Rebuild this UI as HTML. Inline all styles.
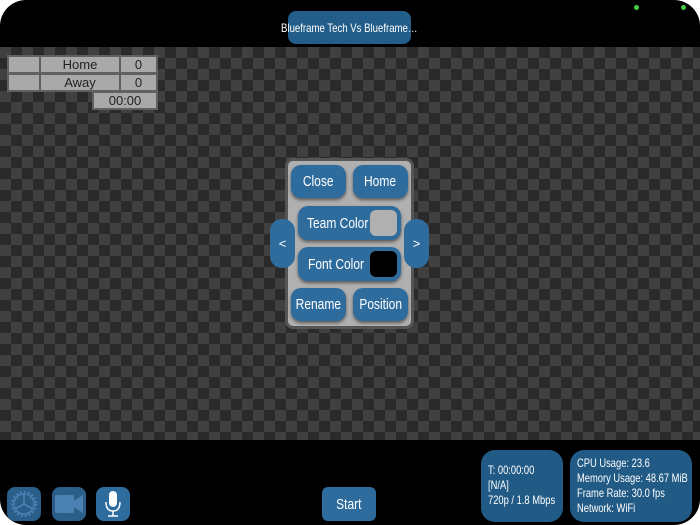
<!DOCTYPE html>
<html><head><style>
*{margin:0;padding:0;box-sizing:border-box}
body{width:700px;height:525px;background:#fff;overflow:hidden;font-family:"Liberation Sans",sans-serif}
#scr{position:absolute;left:0;top:0;width:700px;height:525px;background:#000;border-radius:26px;overflow:hidden}
#chk{position:absolute;left:0;top:47px;width:700px;height:393px;background-color:#2a2a2a;
background-image:linear-gradient(45deg,#404040 25%,transparent 25%,transparent 75%,#404040 75%),linear-gradient(45deg,#404040 25%,transparent 25%,transparent 75%,#404040 75%);
background-size:22px 22px;background-position:11px 0,0 11px}
.blue{background:#2f6c9e;color:#fff;position:absolute;display:flex;align-items:center;justify-content:center;font-family:"Liberation Sans",sans-serif;white-space:nowrap}
.n{display:inline-block;transform:scaleX(.8);transform-origin:center}
.l{transform-origin:left}
.cell{position:absolute;background:#a9a9a9;border:2px solid #606060;font-size:13px;color:#222;display:flex;align-items:center;justify-content:center}
.btn{border-radius:10px;font-size:15px;box-shadow:0 2px 3px rgba(0,0,0,.5)}
.stat{background:#215a85;color:#fff;position:absolute;border-radius:14px;font-size:12px;line-height:15px;padding:10px 0 0 7px;white-space:nowrap}
.stat .n{transform:scaleX(.78);transform-origin:left}
</style></head><body>
<div id="scr">
<div id="chk"></div>
<div class="blue" style="left:288px;top:11px;width:123px;height:33px;border-radius:8px;background:#235e8a;font-size:12px"><span class="n" style="transform:scaleX(.8)">Blueframe Tech Vs Blueframe…</span></div>
<div style="position:absolute;left:634px;top:5px;width:5px;height:5px;border-radius:50%;background:#4c4"></div>
<div style="position:absolute;left:681px;top:5px;width:5px;height:5px;border-radius:50%;background:#4c4"></div>
<div class="cell" style="left:7px;top:55px;width:34px;height:19px"></div>
<div class="cell" style="left:39px;top:55px;width:82px;height:19px">Home</div>
<div class="cell" style="left:119px;top:55px;width:39px;height:19px">0</div>
<div class="cell" style="left:7px;top:73px;width:34px;height:19px"></div>
<div class="cell" style="left:39px;top:73px;width:82px;height:19px">Away</div>
<div class="cell" style="left:119px;top:73px;width:39px;height:19px">0</div>
<div class="cell" style="left:92px;top:91px;width:66px;height:19px;font-size:13px">00:00</div>

<div style="position:absolute;left:285px;top:158px;width:129px;height:171px;background:#b0b0b0;border:3px solid #555;border-radius:8px"></div>
<div class="blue btn" style="left:291px;top:165px;width:55px;height:33px"><span class="n">Close</span></div>
<div class="blue btn" style="left:353px;top:165px;width:55px;height:33px"><span class="n">Home</span></div>
<div class="blue btn" style="left:298px;top:206px;width:103px;height:34px;justify-content:flex-start;padding-left:9px"><span class="n l">Team Color</span></div>
<div style="position:absolute;left:370px;top:210px;width:27px;height:26px;border-radius:6px;background:#b0b0b0"></div>
<div class="blue btn" style="left:298px;top:247px;width:103px;height:34px;justify-content:flex-start;padding-left:10px"><span class="n l">Font Color</span></div>
<div style="position:absolute;left:370px;top:251px;width:27px;height:26px;border-radius:6px;background:#000"></div>
<div class="blue btn" style="left:291px;top:288px;width:55px;height:33px"><span class="n">Rename</span></div>
<div class="blue btn" style="left:353px;top:288px;width:55px;height:33px"><span class="n">Position</span></div>
<div class="blue" style="left:270px;top:219px;width:25px;height:49px;border-radius:12px;font-size:13px">&lt;</div>
<div class="blue" style="left:404px;top:219px;width:25px;height:49px;border-radius:12px;font-size:13px">&gt;</div>

<div class="blue" style="left:7px;top:487px;width:34px;height:34px;border-radius:8px;background:#2b5f8a">
<svg width="30" height="30" viewBox="0 0 30 30"><circle cx="15" cy="15" r="12" fill="none" stroke="#4b82b3" stroke-width="2" stroke-dasharray="2 2"/><circle cx="15" cy="15" r="10" fill="none" stroke="#4b82b3" stroke-width="1.5"/><path d="M15 15L15 5M15 15L6 20M15 15L24 20" stroke="#4b82b3" stroke-width="1.5"/></svg></div>
<div class="blue" style="left:52px;top:487px;width:34px;height:34px;border-radius:8px;background:#2b5f8a">
<svg width="30" height="22" viewBox="0 0 30 22"><rect x="1" y="2" width="19" height="18" rx="2" fill="#4b82b3"/><path d="M20 8L29 2V20L20 14Z" fill="#4b82b3"/></svg></div>
<div class="blue" style="left:96px;top:487px;width:34px;height:34px;border-radius:8px">
<svg width="20" height="30" viewBox="0 0 20 30"><rect x="6" y="2" width="8" height="16" rx="4" fill="#fff"/><path d="M3 13Q3 22 10 22Q17 22 17 13M10 22V27M5 27H15" fill="none" stroke="#fff" stroke-width="1.5"/></svg></div>
<div class="blue" style="left:322px;top:487px;width:54px;height:34px;border-radius:6px;font-size:15px"><span class="n">Start</span></div>
<div class="stat" style="left:481px;top:450px;width:82px;height:72px;padding-top:13px"><span class="n">T: 00:00:00</span><br><span class="n">[N/A]</span><br><span class="n">720p / 1.8 Mbps</span></div>
<div class="stat" style="left:570px;top:450px;width:122px;height:72px;padding-top:6px"><span class="n">CPU Usage: 23.6</span><br><span class="n">Memory Usage: 48.67 MiB</span><br><span class="n">Frame Rate: 30.0 fps</span><br><span class="n">Network: WiFi</span></div>
</div>
</body></html>
